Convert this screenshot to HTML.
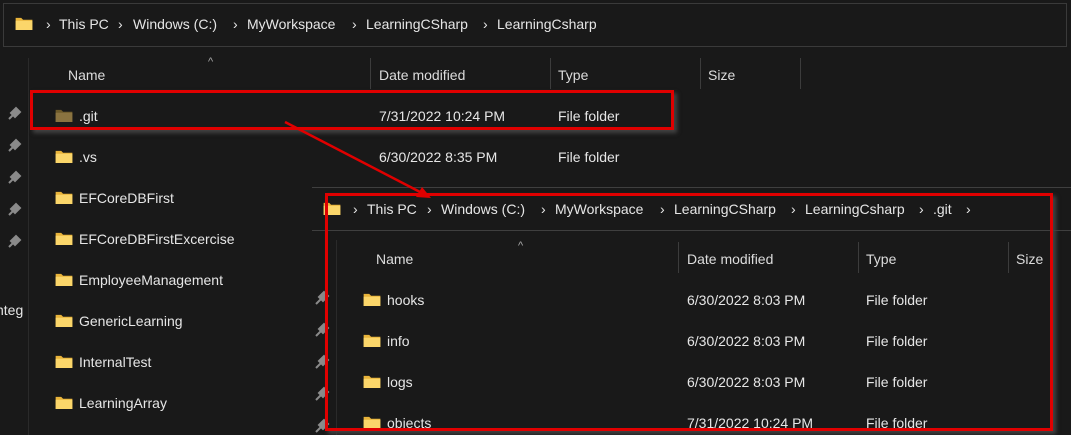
<!DOCTYPE html>
<html><head><meta charset="utf-8"><style>
body{margin:0;width:1071px;height:435px;background:#191919;overflow:hidden;position:relative;font-family:"Liberation Sans",sans-serif;font-size:14px;color:#e6e6e6}
.a{position:absolute;white-space:nowrap;line-height:16px}
.f{position:absolute;width:18px;height:13px}
.sep{position:absolute;width:1px;background:#3c3c3c}
.hl{position:absolute;height:1px;background:#3f3f3f}
.h{color:#dcdcdc}
</style></head><body>
<svg width="0" height="0" style="position:absolute"><defs>
<symbol id="fd" viewBox="0 0 18 14"><path d="M0 1h6l2 2h10v11H0z" fill="#e8b33a"/><path d="M0 4h18v10H0z" fill="#fbd66a"/></symbol>
<symbol id="fg" viewBox="0 0 18 14"><path d="M0 1h6l2 2h10v11H0z" fill="#6d5a2a"/><path d="M0 4h18v10H0z" fill="#8a7340"/></symbol>
</defs></svg>

<!-- address bar -->
<div style="position:absolute;left:3px;top:3px;width:1062px;height:42px;border:1px solid #3a3a3a"></div>
<svg class="f" style="left:15px;top:17px" width="18" height="14"><use href="#fd"/></svg>
<div class="a" style="left:46px;top:16px">›</div>
<div class="a" style="left:59px;top:16px">This PC</div>
<div class="a" style="left:118px;top:16px">›</div>
<div class="a" style="left:133px;top:16px">Windows (C:)</div>
<div class="a" style="left:233px;top:16px">›</div>
<div class="a" style="left:247px;top:16px">MyWorkspace</div>
<div class="a" style="left:352px;top:16px">›</div>
<div class="a" style="left:366px;top:16px">LearningCSharp</div>
<div class="a" style="left:483px;top:16px">›</div>
<div class="a" style="left:497px;top:16px">LearningCsharp</div>

<div class="sep" style="left:28px;top:58px;height:377px;background:#2a2a2a"></div>
<div class="a" style="left:208px;top:54px;color:#aaa;font-size:11px">^</div>
<div class="a h" style="left:68px;top:67px">Name</div>
<div class="a h" style="left:379px;top:67px">Date modified</div>
<div class="a h" style="left:558px;top:67px">Type</div>
<div class="a h" style="left:708px;top:67px">Size</div>
<div class="sep" style="left:370px;top:58px;height:31px"></div>
<div class="sep" style="left:550px;top:58px;height:31px"></div>
<div class="sep" style="left:700px;top:58px;height:31px"></div>
<div class="sep" style="left:800px;top:58px;height:31px"></div>

<svg class="f" style="left:55px;top:109px" width="18" height="14"><use href="#fg"/></svg>
<div class="a" style="left:79px;top:108px">.git</div>
<div class="a" style="left:379px;top:108px">7/31/2022 10:24 PM</div>
<div class="a" style="left:558px;top:108px">File folder</div>

<svg class="f" style="left:55px;top:150px" width="18" height="14"><use href="#fd"/></svg>
<div class="a" style="left:79px;top:149px">.vs</div>
<div class="a" style="left:379px;top:149px">6/30/2022 8:35 PM</div>
<div class="a" style="left:558px;top:149px">File folder</div>

<svg class="f" style="left:55px;top:191px" width="18" height="14"><use href="#fd"/></svg>
<div class="a" style="left:79px;top:190px">EFCoreDBFirst</div>
<svg class="f" style="left:55px;top:232px" width="18" height="14"><use href="#fd"/></svg>
<div class="a" style="left:79px;top:231px">EFCoreDBFirstExcercise</div>
<svg class="f" style="left:55px;top:273px" width="18" height="14"><use href="#fd"/></svg>
<div class="a" style="left:79px;top:272px">EmployeeManagement</div>
<svg class="f" style="left:55px;top:314px" width="18" height="14"><use href="#fd"/></svg>
<div class="a" style="left:79px;top:313px">GenericLearning</div>
<svg class="f" style="left:55px;top:355px" width="18" height="14"><use href="#fd"/></svg>
<div class="a" style="left:79px;top:354px">InternalTest</div>
<svg class="f" style="left:55px;top:396px" width="18" height="14"><use href="#fd"/></svg>
<div class="a" style="left:79px;top:395px">LearningArray</div>
<div class="a" style="left:-4px;top:302px">nteg</div>

<svg style="position:absolute;left:0;top:100px" width="30" height="160">
<g stroke="#8a8a8a" stroke-width="2" fill="#8a8a8a">
<path d="M11 13l5-5 4 4-5 5z M9 19l4-4"/>
<path transform="translate(0,32)" d="M11 13l5-5 4 4-5 5z M9 19l4-4"/>
<path transform="translate(0,64)" d="M11 13l5-5 4 4-5 5z M9 19l4-4"/>
<path transform="translate(0,96)" d="M11 13l5-5 4 4-5 5z M9 19l4-4"/>
<path transform="translate(0,128)" d="M11 13l5-5 4 4-5 5z M9 19l4-4"/>
</g></svg>

<!-- first red box -->
<div style="position:absolute;left:30px;top:90px;width:638px;height:34px;border:3px solid #e00000;box-shadow:3px 3px 4px #444"></div>

<!-- second panel -->
<div style="position:absolute;left:312px;top:187px;width:759px;height:248px;background:#191919"></div>
<div class="hl" style="left:312px;top:187px;width:759px"></div>
<div class="hl" style="left:312px;top:230px;width:759px"></div>
<svg class="f" style="left:323px;top:202px" width="18" height="14"><use href="#fd"/></svg>
<div class="a" style="left:353px;top:201px">›</div>
<div class="a" style="left:367px;top:201px">This PC</div>
<div class="a" style="left:427px;top:201px">›</div>
<div class="a" style="left:441px;top:201px">Windows (C:)</div>
<div class="a" style="left:541px;top:201px">›</div>
<div class="a" style="left:555px;top:201px">MyWorkspace</div>
<div class="a" style="left:660px;top:201px">›</div>
<div class="a" style="left:674px;top:201px">LearningCSharp</div>
<div class="a" style="left:791px;top:201px">›</div>
<div class="a" style="left:805px;top:201px">LearningCsharp</div>
<div class="a" style="left:919px;top:201px">›</div>
<div class="a" style="left:933px;top:201px">.git</div>
<div class="a" style="left:966px;top:201px">›</div>
<div class="sep" style="left:336px;top:240px;height:195px;background:#2a2a2a"></div>
<div class="a" style="left:518px;top:238px;color:#aaa;font-size:11px">^</div>
<div class="a h" style="left:376px;top:251px">Name</div>
<div class="a h" style="left:687px;top:251px">Date modified</div>
<div class="a h" style="left:866px;top:251px">Type</div>
<div class="a h" style="left:1016px;top:251px">Size</div>
<div class="sep" style="left:678px;top:242px;height:31px"></div>
<div class="sep" style="left:858px;top:242px;height:31px"></div>
<div class="sep" style="left:1008px;top:242px;height:31px"></div>

<svg class="f" style="left:363px;top:293px" width="18" height="14"><use href="#fd"/></svg>
<div class="a" style="left:387px;top:292px">hooks</div>
<div class="a" style="left:687px;top:292px">6/30/2022 8:03 PM</div>
<div class="a" style="left:866px;top:292px">File folder</div>
<svg class="f" style="left:363px;top:334px" width="18" height="14"><use href="#fd"/></svg>
<div class="a" style="left:387px;top:333px">info</div>
<div class="a" style="left:687px;top:333px">6/30/2022 8:03 PM</div>
<div class="a" style="left:866px;top:333px">File folder</div>
<svg class="f" style="left:363px;top:375px" width="18" height="14"><use href="#fd"/></svg>
<div class="a" style="left:387px;top:374px">logs</div>
<div class="a" style="left:687px;top:374px">6/30/2022 8:03 PM</div>
<div class="a" style="left:866px;top:374px">File folder</div>
<svg class="f" style="left:363px;top:416px" width="18" height="14"><use href="#fd"/></svg>
<div class="a" style="left:387px;top:415px">objects</div>
<div class="a" style="left:687px;top:415px">7/31/2022 10:24 PM</div>
<div class="a" style="left:866px;top:415px">File folder</div>

<svg style="position:absolute;left:312px;top:285px" width="20" height="150">
<g stroke="#8a8a8a" stroke-width="2" fill="#8a8a8a">
<path d="M7 12l5-5 4 4-5 5z M4 19l5-5"/>
<path transform="translate(0,32)" d="M7 12l5-5 4 4-5 5z M4 19l5-5"/>
<path transform="translate(0,64)" d="M7 12l5-5 4 4-5 5z M4 19l5-5"/>
<path transform="translate(0,96)" d="M7 12l5-5 4 4-5 5z M4 19l5-5"/>
<path transform="translate(0,128)" d="M7 12l5-5 4 4-5 5z M4 19l5-5"/>
</g></svg>

<!-- second red box -->
<div style="position:absolute;left:325px;top:193px;width:722px;height:232px;border:3px solid #e00000;box-shadow:3px 3px 4px #444"></div>

<!-- arrow -->
<svg style="position:absolute;left:0;top:0" width="1071" height="435">
<line x1="285" y1="122" x2="422" y2="193" stroke="#e00000" stroke-width="2.5"/>
<path d="M431 198l-15-1 6-10z" fill="#e00000"/>
</svg>
</body></html>
